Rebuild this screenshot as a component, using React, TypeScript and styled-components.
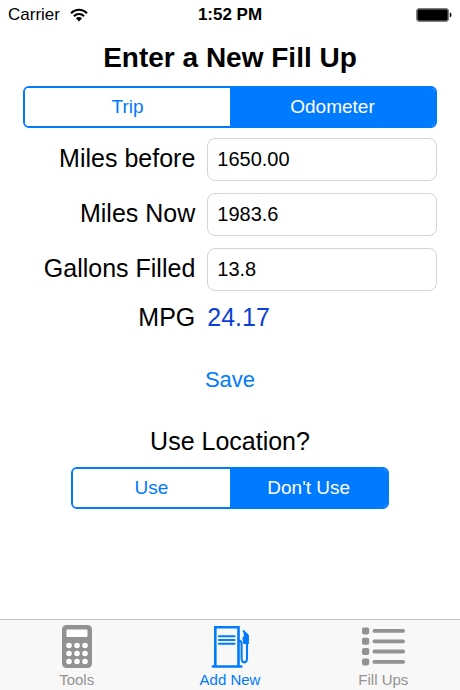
import React, { useState } from "react";
import styled, { createGlobalStyle } from "styled-components";

const BLUE = "#007aff";
const GREY = "#929292";

const GlobalStyle = createGlobalStyle`
  *, *::before, *::after { box-sizing: border-box; }
  body {
    margin: 0;
    background: #fff;
    color: #000;
    font-family: "Liberation Sans", Helvetica, Arial, sans-serif;
  }
  button, input { font-family: inherit; }
`;

const Screen = styled.div`
  display: flex;
  flex-direction: column;
  min-height: 100vh;
`;

const StatusBar = styled.header`
  display: grid;
  grid-template-columns: 1fr auto 1fr;
  align-items: center;
  height: 30px;
  padding: 0 8px;
  font-size: 17px;
`;

const Carrier = styled.div`
  display: flex;
  align-items: center;
  gap: 10px;
`;

const Clock = styled.time`
  font-weight: 700;
`;

const BatterySlot = styled.div`
  display: flex;
  justify-content: flex-end;
`;

const Main = styled.main`
  display: flex;
  flex: 1;
  flex-direction: column;
  align-items: center;
  padding: 10px 23px 20px;
`;

const Title = styled.h1`
  margin: 0 0 10px;
  font-size: 28px;
  font-weight: 700;
  line-height: 36px;
`;

const Segmented = styled.div<{ $compact?: boolean }>`
  display: flex;
  width: ${(p) => (p.$compact ? "77%" : "100%")};
  height: 42px;
  overflow: hidden;
  border: 2px solid ${BLUE};
  border-radius: 6px;
`;

const Segment = styled.button<{ $on: boolean }>`
  flex: 1;
  padding: 0;
  border: 0;
  background: ${(p) => (p.$on ? BLUE : "#fff")};
  color: ${(p) => (p.$on ? "#fff" : BLUE)};
  font-size: 19px;
  cursor: pointer;
`;

const Form = styled.form`
  display: flex;
  flex-direction: column;
  gap: 12px;
  width: 100%;
  margin-top: 10px;
`;

const Row = styled.div`
  display: grid;
  grid-template-columns: 3fr 4fr;
  column-gap: 12px;
  align-items: center;
`;

const Label = styled.label`
  padding-bottom: 3px;
  font-size: 25px;
  line-height: 40px;
  text-align: right;
  white-space: nowrap;
`;

const Field = styled.input`
  width: 100%;
  height: 43px;
  padding: 0 9px;
  border: 1px solid #d4d4d4;
  border-radius: 8px;
  background: #fff;
  color: #000;
  font-size: 20px;
`;

const ResultLabel = styled.span`
  font-size: 25px;
  line-height: 28px;
  text-align: right;
`;

const Result = styled.output`
  color: #0a3fd6;
  font-size: 25px;
  line-height: 28px;
`;

const SaveButton = styled.button`
  align-self: center;
  height: 36px;
  margin-top: 19px;
  padding: 0 12px;
  border: 0;
  background: none;
  color: ${BLUE};
  font-size: 22px;
  cursor: pointer;
`;

const Question = styled.h2`
  margin: 29px 0 12px;
  font-size: 25px;
  font-weight: 400;
  line-height: 28px;
`;

const TabBar = styled.nav`
  display: grid;
  grid-template-columns: repeat(3, 1fr);
  border-top: 1px solid #c4c4c4;
  background: #f8f8f8;
`;

const Tab = styled.a<{ $active?: boolean }>`
  display: flex;
  flex-direction: column;
  align-items: center;
  gap: 3px;
  padding: 5px 0 1px;
  color: ${(p) => (p.$active ? BLUE : GREY)};
  font-size: 15px;
  line-height: 18px;
  text-decoration: none;
`;

const WifiIcon = () => (
  <svg width="18" height="14" viewBox="0 0 18 14" aria-hidden="true">
    <g fill="none" stroke="#000" strokeWidth="2">
      <path d="M1 5.2C5.6.6 12.4.6 17 5.2" />
      <path d="M3.9 8.2c2.9-2.9 7.3-2.9 10.2 0" />
    </g>
    <path d="M9 13.4 5.9 10.3c1.7-1.7 4.5-1.7 6.2 0z" />
  </svg>
);

const BatteryIcon = () => (
  <svg width="36" height="14" viewBox="0 0 36 14" role="img" aria-label="Battery full">
    <rect x="0.6" y="0.6" width="32" height="12.8" rx="2.4" fill="#888" stroke="#777" strokeWidth="1" />
    <rect x="1.6" y="1.6" width="30" height="10.8" rx="1.4" />
    <path d="M33.8 4.6c2.2.6 2.2 4.2 0 4.8z" />
  </svg>
);

const CalculatorIcon = () => (
  <svg width="30" height="43" viewBox="0 0 30 43" aria-hidden="true">
    <rect width="30" height="43" rx="4.5" fill={GREY} />
    <rect x="4.5" y="4.5" width="21" height="7.5" rx="1" fill="#fff" />
    {[20.5, 28.5, 36.5].map((y) =>
      [7, 15, 23].map((x) => <circle key={`${x}-${y}`} cx={x} cy={y} r="2.8" fill="#fff" />)
    )}
  </svg>
);

const PumpIcon = () => (
  <svg width="38" height="43" viewBox="0 0 38 43" fill="none" stroke={BLUE} aria-hidden="true">
    <path d="M4.300 41V2.200h23.200V41" strokeWidth="2.600" />
    <path d="M1.800 41.500h28.600" strokeWidth="2.400" strokeLinecap="round" />
    <path d="M8 11.200h15.500M8 14.900h15.500M8 18.700h15.500" strokeWidth="2" strokeLinecap="round" />
    <path d="M28 15.500c2 .4 2.600 1.400 2.600 3.200v14.600c0 5.400 5.400 5.400 5.400 0V18" strokeWidth="2.100" />
    <path d="M32.300 5.500l4.200 4 .8 1v8h-4.500l-.8-5.500 1.400-1.500v-2.500z" fill={BLUE} strokeWidth="1.200" strokeLinejoin="round" />
  </svg>
);

const ListIcon = () => (
  <svg width="43" height="43" viewBox="0 0 43 43" fill={GREY} aria-hidden="true">
    {[2.4, 12.8, 23, 33.4].map((y) => (
      <g key={y}>
        <rect x="0" y={y} width="7.200" height="7" rx="1.800" />
        <rect x="10.500" y={y + 1.600} width="32.500" height="3.800" rx="1.900" />
      </g>
    ))}
  </svg>
);

type SwitchProps = {
  label: string;
  options: string[];
  value: string;
  onChange: (value: string) => void;
  compact?: boolean;
};

const SegmentedControl = ({ label, options, value, onChange, compact }: SwitchProps) => (
  <Segmented role="group" aria-label={label} $compact={compact}>
    {options.map((option) => (
      <Segment
        key={option}
        type="button"
        $on={option === value}
        aria-pressed={option === value}
        onClick={() => onChange(option)}
      >
        {option}
      </Segment>
    ))}
  </Segmented>
);

export default function App() {
  const [mode, setMode] = useState("Odometer");
  const [location, setLocation] = useState("Don't Use");
  const [before, setBefore] = useState("1650.00");
  const [now, setNow] = useState("1983.6");
  const [gallons, setGallons] = useState("13.8");

  const mpg = (Number(now) - Number(before)) / Number(gallons);

  const fields = [
    { id: "before", label: "Miles before", value: before, set: setBefore },
    { id: "now", label: "Miles Now", value: now, set: setNow },
    { id: "gallons", label: "Gallons Filled", value: gallons, set: setGallons },
  ];

  return (
    <Screen>
      <GlobalStyle />
      <StatusBar>
        <Carrier>
          Carrier
          <WifiIcon />
        </Carrier>
        <Clock>1:52 PM</Clock>
        <BatterySlot>
          <BatteryIcon />
        </BatterySlot>
      </StatusBar>

      <Main>
        <Title>Enter a New Fill Up</Title>
        <SegmentedControl
          label="Mileage source"
          options={["Trip", "Odometer"]}
          value={mode}
          onChange={setMode}
        />
        <Form onSubmit={(e) => e.preventDefault()}>
          {fields.map((f) => (
            <Row key={f.id}>
              <Label htmlFor={f.id}>{f.label}</Label>
              <Field
                id={f.id}
                inputMode="decimal"
                value={f.value}
                onChange={(e) => f.set(e.target.value)}
              />
            </Row>
          ))}
          <Row>
            <ResultLabel id="mpg-label">MPG</ResultLabel>
            <Result aria-labelledby="mpg-label">
              {Number.isFinite(mpg) ? mpg.toFixed(2) : "0.00"}
            </Result>
          </Row>
          <SaveButton type="submit">Save</SaveButton>
        </Form>
        <Question>Use Location?</Question>
        <SegmentedControl
          label="Use Location?"
          options={["Use", "Don't Use"]}
          value={location}
          onChange={setLocation}
          compact
        />
      </Main>

      <TabBar>
        <Tab href="#tools">
          <CalculatorIcon />
          Tools
        </Tab>
        <Tab href="#add" $active aria-current="page">
          <PumpIcon />
          Add New
        </Tab>
        <Tab href="#fill-ups">
          <ListIcon />
          Fill Ups
        </Tab>
      </TabBar>
    </Screen>
  );
}
